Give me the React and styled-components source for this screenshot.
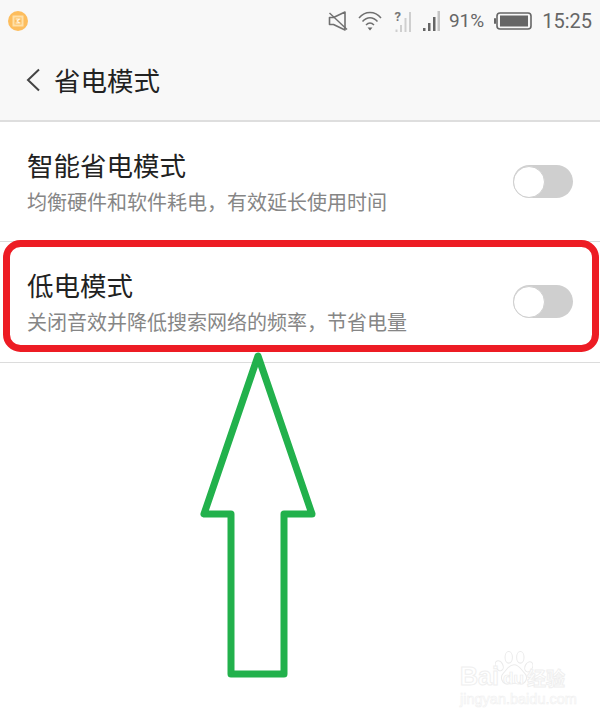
import React from "react";
import styled, { createGlobalStyle } from "styled-components";

const Global = createGlobalStyle`
  html, body { margin: 0; padding: 0; background: #fff; }
  body { font-family: "Noto Sans CJK SC", "Noto Sans", sans-serif; }
`;

const Page = styled.div`
  position: relative;
  width: 600px;
  height: 718px;
  overflow: hidden;
  background: #fff;
`;

const TopArea = styled.header`
  background: #f8f8f8;
  border-bottom: 2px solid #dedede;
  height: 120px;
`;

const StatusBar = styled.div`
  height: 40px;
  padding: 2px 8px 0;
  box-sizing: border-box;
  display: flex;
  align-items: center;
  justify-content: space-between;
`;

const StatusGroup = styled.div`
  display: flex;
  align-items: center;
`;

const StatusIcon = styled.svg`
  display: block;
  flex: none;
  margin-right: ${(p) => p.$gap}px;
`;

const StatusText = styled.span`
  font-family: Roboto, sans-serif;
  font-size: ${(p) => p.$size}px;
  line-height: 24px;
  color: #666;
  margin-right: ${(p) => p.$gap || 0}px;
`;

const Header = styled.div`
  height: 80px;
  padding-left: 26px;
  display: flex;
  align-items: center;
`;

const BackIcon = styled.svg`
  display: block;
  flex: none;
  margin-right: 14px;
`;

const HeaderTitle = styled.h1`
  margin: 0;
  font-size: 26.5px;
  font-weight: 400;
  line-height: 36px;
  color: #222;
`;

const Row = styled.div`
  height: ${(p) => p.$h}px;
  box-sizing: border-box;
  border-bottom: 1px solid #dcdcdc;
  padding: 0 27px ${(p) => p.$pb}px;
  display: flex;
  align-items: center;
  justify-content: space-between;
`;

const RowText = styled.div`
  display: flex;
  flex-direction: column;
`;

const RowTitle = styled.div`
  font-size: 26.5px;
  line-height: 34px;
  color: #222;
`;

const RowSub = styled.div`
  font-size: 20px;
  line-height: 28px;
  margin-top: 6px;
  color: #868686;
`;

const Toggle = styled.div`
  width: 60px;
  height: 33px;
  border-radius: 17px;
  background: #cfcfcf;
  display: flex;
  align-items: center;
`;

const Knob = styled.div`
  width: 32px;
  height: 32px;
  box-sizing: border-box;
  border-radius: 50%;
  background: #fff;
  border: 1.5px solid #cfcfcf;
`;

const Annotation = styled.svg`
  position: absolute;
  left: 0;
  top: 0;
  pointer-events: none;
`;

const Watermark = styled.div`
  position: absolute;
  left: 460px;
  top: 652px;
  width: 110px;
  height: 54px;
  color: #fff;
  -webkit-text-stroke: 1px #efefef;
  font-family: "Liberation Sans", sans-serif;
`;

const WmBai = styled.span`
  position: absolute;
  left: 0;
  top: 11px;
  font-size: 25px;
  font-weight: 700;
  line-height: 26px;
`;

const WmJing = styled.span`
  position: absolute;
  left: 67px;
  top: 14px;
  font-family: "Noto Sans CJK SC", sans-serif;
  font-size: 19px;
  font-weight: 700;
  line-height: 24px;
`;

const WmUrl = styled.span`
  position: absolute;
  left: 0;
  top: 40px;
  font-size: 14.5px;
  line-height: 15px;
  white-space: nowrap;
  -webkit-text-stroke: 0.6px #f0f0f0;
`;

const WmPaw = styled.svg`
  position: absolute;
  left: 35px;
  top: -1px;
`;

const WmDu = styled.span`
  position: absolute;
  left: 43px;
  top: 19px;
  font-size: 17px;
  font-weight: 700;
  line-height: 16px;
  -webkit-text-stroke: 0.7px #ececec;
`;

const settings = [
  { title: "智能省电模式", sub: "均衡硬件和软件耗电，有效延长使用时间", h: 120, pb: 0 },
  { title: "低电模式", sub: "关闭音效并降低搜索网络的频率，节省电量", h: 121, pb: 1 },
];

export default function App() {
  return (
    <Page>
      <Global />
      <TopArea>
        <StatusBar>
          <StatusIcon width="20" height="20" viewBox="0 0 20 20" $gap={0}>
            <circle cx="10" cy="10" r="10" fill="#fdbd5d" />
            <rect x="4.500" y="4.500" width="11" height="11" fill="#ffe0a8" />
            <rect x="6.500" y="6.500" width="7" height="7" fill="#fdbd5d" />
            <path d="M7.500 8h5M7.500 12h5M11.500 8 9 10l2.500 2" stroke="#fff6e4" strokeWidth="1.100" fill="none" />
          </StatusIcon>
          <StatusGroup>
            <StatusIcon width="20" height="20" viewBox="0 0 20 20" $gap={10}>
              <path d="M1.500 6.500h4L17 1v18L5.500 13.500h-4z" fill="none" stroke="#707070" strokeWidth="1.600" strokeLinejoin="round" />
              <path d="M1.500 2 19 18.500" stroke="#707070" strokeWidth="1.400" />
            </StatusIcon>
            <StatusIcon width="24" height="20" viewBox="0 0 24 20" $gap={12}>
              <path d="M1 7C7-.4 17-.4 23 7M4.500 10.500c4.500-5 10.500-5 15 0M8 14c2.500-2.600 5.500-2.600 8 0" fill="none" stroke="#707070" strokeWidth="1.500" />
              <path d="M9.500 16.500h5L12 19.500z" fill="#666" />
            </StatusIcon>
            <StatusIcon width="18" height="22" viewBox="0 0 18 22" $gap={11}>
              <text x="0.500" y="11" fontFamily="Roboto, sans-serif" fontSize="13" fontWeight="700" fill="#777">?</text>
              <path d="M1.500 19.500h2V22h-2zM6 15h2v7H6zM10.500 8h2v14h-2zM15 2h2v20h-2z" fill="#cfcfcf" />
            </StatusIcon>
            <StatusIcon width="17" height="20" viewBox="0 0 17 20" $gap={9}>
              <path d="M0 17h2.500v3H0zM5 12h2.500v8H5zM10 6h2.500v14H10z" fill="#666" />
              <path d="M14.500 0H17v20h-2.500z" fill="#c4c4c4" />
            </StatusIcon>
            <StatusText $size={19} $gap={10}>91%</StatusText>
            <StatusIcon width="38" height="18" viewBox="0 0 38 18" $gap={10}>
              <rect x="0" y="6" width="2" height="6" rx="1" fill="#666" />
              <rect x="3" y="1" width="34" height="16" rx="3" fill="none" stroke="#666" strokeWidth="1.600" />
              <rect x="6" y="3.500" width="28" height="11" fill="#666" />
            </StatusIcon>
            <StatusText $size={20}>15:25</StatusText>
          </StatusGroup>
        </StatusBar>
        <Header>
          <BackIcon width="14" height="24" viewBox="0 0 14 24">
            <path d="M13 1.500 2 12l11 10.500" fill="none" stroke="#444" strokeWidth="2" />
          </BackIcon>
          <HeaderTitle>省电模式</HeaderTitle>
        </Header>
      </TopArea>
      {settings.map((s) => (
        <Row key={s.title} $h={s.h} $pb={s.pb}>
          <RowText>
            <RowTitle>{s.title}</RowTitle>
            <RowSub>{s.sub}</RowSub>
          </RowText>
          <Toggle>
            <Knob />
          </Toggle>
        </Row>
      ))}
      <Annotation width="600" height="718" viewBox="0 0 600 718">
        <rect x="6.500" y="243.500" width="589" height="105" rx="14" fill="none" stroke="#ed1c24" strokeWidth="7" />
        <path d="M258 356 204 514h27v160h53V514h28z" fill="none" stroke="#22b14c" strokeWidth="7" strokeLinejoin="round" />
      </Annotation>
      <Watermark>
        <WmPaw width="38" height="38" viewBox="0 0 36 36">
          <g fill="#fff" stroke="#ebebeb" strokeWidth="1">
            <ellipse cx="4" cy="14" rx="3.500" ry="5" transform="rotate(-25 4 14)" />
            <ellipse cx="13" cy="6" rx="3.500" ry="5.500" />
            <ellipse cx="24" cy="6" rx="3.500" ry="5.500" />
            <ellipse cx="32" cy="15" rx="3.500" ry="5" transform="rotate(25 32 15)" />
            <path d="M18 13c5 0 7 5 10 8 4 4 1 11-5 10-3-.5-7-.5-10 0-6 1-9-6-5-10 3-3 5-8 10-8z" />
          </g>
        </WmPaw>
        <WmBai>Bai</WmBai>
        <WmDu>du</WmDu>
        <WmJing>经验</WmJing>
        <WmUrl>jingyan.baidu.com</WmUrl>
      </Watermark>
    </Page>
  );
}
